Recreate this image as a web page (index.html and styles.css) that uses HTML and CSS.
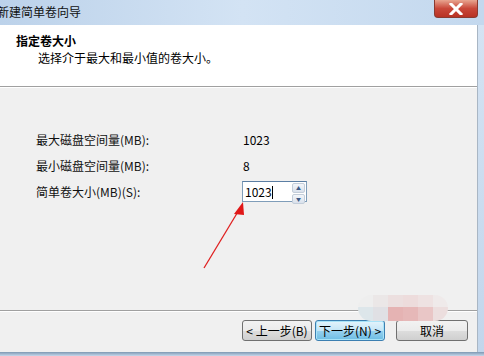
FILE: index.html
```html
<!DOCTYPE html>
<html lang="zh-CN">
<head>
    <meta charset="UTF-8">
    <title>新建简单卷向导</title>
    <link rel="stylesheet" href="styles.css">
</head>
<body>
    <div class="window">
        <div class="titlebar">
            <span class="title">新建简单卷向导</span>
            <span class="close">
                <svg width="16" height="12" viewBox="0 0 16 12">
                    <path d="M3 1 L13 11 M13 1 L3 11" stroke="#fff" stroke-width="3" stroke-linecap="square"/>
                </svg>
            </span>
        </div>
        <div class="frame">
            <div class="client">
                <div class="header">
                    <h1>指定卷大小</h1>
                    <p>选择介于最大和最小值的卷大小。</p>
                </div>
                <div class="body">
                    <div class="row">
                        <span class="label">最大磁盘空间量(MB):</span>
                        <span class="value">1023</span>
                    </div>
                    <div class="row">
                        <span class="label">最小磁盘空间量(MB):</span>
                        <span class="value">8</span>
                    </div>
                    <div class="row">
                        <span class="label">简单卷大小(MB)(S):</span>
                        <div class="spin">
                            <span class="spin-text">1023<i class="caret"></i></span>
                            <span class="spin-btns">
                                <span class="spin-btn">&#9650;</span>
                                <span class="spin-btn">&#9660;</span>
                            </span>
                        </div>
                    </div>
                    <svg class="arrow" width="60" height="70" viewBox="0 0 60 70">
                        <path d="M3 68 L38 10" stroke="#e02020" stroke-width="1.3"/>
                        <path d="M42 2 L33 14 L43 15 Z" fill="#e01818"/>
                    </svg>
                    <!-- pixelated watermark -->
                    <div class="mosaic">
                        <i style="background:#eeeeee"></i><i style="background:#ebe7e7"></i><i style="background:#ecdfdf"></i><i style="background:#eddcdc"></i><i style="background:#eee2e2"></i><i style="background:#efeaea"></i>
                        <i style="background:#dde6ea"></i><i style="background:#e0e0e4"></i><i style="background:#e5b3b3"></i><i style="background:#e6b8b8"></i><i style="background:#e9c6c6"></i><i style="background:#ecdede"></i>
                    </div>
                </div>
                <div class="footer">
                    <button class="btn">&lt; 上一步(B)</button>
                    <button class="btn btn-default">下一步(N) &gt;</button>
                    <button class="btn btn-cancel">取消</button>
                </div>
            </div>
            <div class="edge"></div>
        </div>
        <div class="bottom"></div>
    </div>
</body>
</html>
```

FILE: styles.css
```css
body {
    margin: 0;
    padding: 0;
    font-family: "Noto Sans CJK SC", "DejaVu Sans", sans-serif;
    font-size: 12px;
    color: #000;
    background-color: #c9dbef;
}
.window {
    width: 484px;
    height: 356px;
    display: flex;
    flex-direction: column;
    overflow: hidden;
}
.titlebar {
    height: 25px;
    display: flex;
    align-items: flex-start;
    justify-content: space-between;
    background: linear-gradient(to right, #bcd2ea, #d3e3f4 50%, #c3d8ee);
}
.title {
    margin-left: -3px;
    line-height: 24px;
    font-size: 12px;
    color: #111;
}
.close {
    width: 44px;
    height: 18px;
    margin-right: 6px;
    display: flex;
    align-items: center;
    justify-content: center;
    border: 1px solid #8a3a30;
    border-top: none;
    border-radius: 0 0 4px 4px;
    background: linear-gradient(#e8a590, #c9483a 50%, #b83224);
    box-sizing: border-box;
}
.frame {
    flex: 1;
    display: flex;
}
.client {
    flex: 1;
    display: flex;
    flex-direction: column;
    background-color: #f0f0f0;
    border-right: 1px solid #a9b6c4;
}
.edge {
    width: 6px;
    background: linear-gradient(#d4e3f3, #c2d6ec);
}
.header {
    height: 62px;
    background-color: #fff;
    border-bottom: 1px solid #a0a0a0;
    box-shadow: 0 1px 0 #fff;
    padding: 7px 0 0 16px;
    box-sizing: border-box;
}
.header h1 {
    margin: 0;
    font-size: 12px;
    font-weight: bold;
    line-height: 17px;
}
.header p {
    margin: 0 0 0 22px;
    line-height: 17px;
}
.body {
    flex: 1;
    position: relative;
    padding: 39px 0 0 36px;
}
.row {
    display: flex;
    align-items: center;
    height: 26px;
}
.label {
    width: 206px;
    color: #111;
}
.value {
    padding-left: 1px;
}
.spin {
    width: 65px;
    height: 21px;
    display: flex;
    border: 1px solid #7f9db9;
    border-top-color: #5b7ea3;
    background-color: #fff;
    box-sizing: border-box;
}
.spin-text {
    flex: 1;
    padding-left: 2px;
    line-height: 19px;
}
.caret {
    display: inline-block;
    width: 1px;
    height: 13px;
    background-color: #000;
    vertical-align: -2px;
}
.spin-btns {
    width: 13px;
    display: flex;
    flex-direction: column;
    padding: 1px 1px 1px 0;
    gap: 1px;
}
.spin-btn {
    flex: 1;
    font-size: 5px;
    line-height: 8px;
    text-align: center;
    color: #3c5a86;
    background: linear-gradient(#f3f6fa, #d9e1ec);
    border: 1px solid #c3cdd9;
    border-radius: 2px;
}
.arrow {
    position: absolute;
    left: 201px;
    top: 113px;
}
.mosaic {
    position: absolute;
    z-index: 2;
    left: 358px;
    top: 208px;
    width: 90px;
    height: 26px;
    display: grid;
    grid-template-columns: repeat(6, 1fr);
    grid-template-rows: 12px 14px;
    border-radius: 13px;
    overflow: hidden;
}
.footer {
    height: 42px;
    display: flex;
    align-items: flex-start;
    justify-content: flex-end;
    padding: 9px 9px 0 0;
    border-top: 1px solid #a0a0a0;
    box-shadow: inset 0 1px 0 #fff;
    box-sizing: border-box;
    position: relative;
}
.btn {
    height: 21px;
    padding: 0;
    font-family: inherit;
    font-size: 12px;
    color: #000;
    border: 1px solid #707070;
    border-radius: 3px;
    background: linear-gradient(#f2f2f2, #ebebeb 50%, #dddddd 51%, #cfcfcf);
    width: 70px;
    margin-left: 3px;
    line-height: 18px;
}
.btn-default {
    border-color: #3c7fb1;
    background: linear-gradient(#e5f4fc, #c4e5f6 50%, #98d1ef 51%, #6dbde4);
    box-shadow: inset 0 0 0 1px #a8e3f8;
}
.btn-cancel {
    margin-left: 11px;
    width: 72px;
}
.bottom {
    height: 4px;
    background: linear-gradient(#7e98b2, #c6d8ec);
}
```
